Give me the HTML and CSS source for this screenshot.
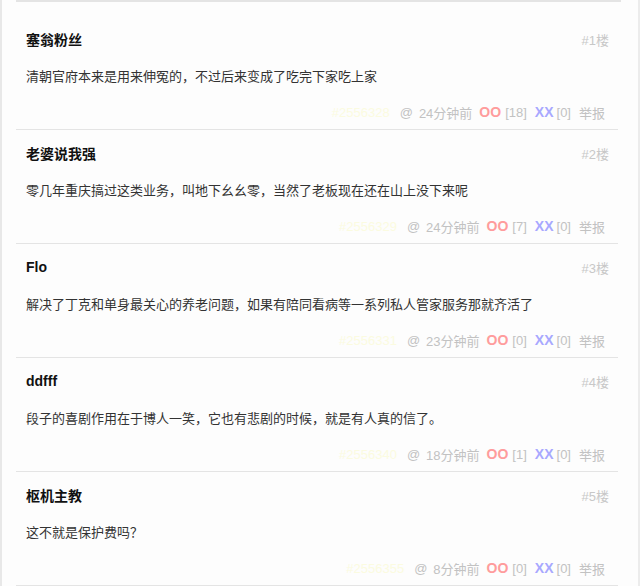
FILE: index.html
```html
<!DOCTYPE html>
<html lang="zh">
<head>
<meta charset="utf-8">
<link rel="stylesheet" href="styles.css">
</head>
<body>
<div class="wrap">
  <div class="topline"></div>
  <ol class="list">
    <li class="item">
      <div class="head"><b class="name">塞翁粉丝</b><span class="floor">#1楼</span></div>
      <p class="text">清朝官府本来是用来伸冤的，不过后来变成了吃完下家吃上家</p>
      <div class="foot"><span class="hash">#2556328</span><span class="at">@</span><span class="time">24分钟前</span><span class="oo">OO</span><span class="cnt">[18]</span><span class="xx">XX</span><span class="cnt">[0]</span><span>举报</span></div>
    </li>
    <li class="item">
      <div class="head"><b class="name">老婆说我强</b><span class="floor">#2楼</span></div>
      <p class="text">零几年重庆搞过这类业务，叫地下幺幺零，当然了老板现在还在山上没下来呢</p>
      <div class="foot"><span class="hash">#2556329</span><span class="at">@</span><span class="time">24分钟前</span><span class="oo">OO</span><span class="cnt">[7]</span><span class="xx">XX</span><span class="cnt">[0]</span><span>举报</span></div>
    </li>
    <li class="item">
      <div class="head"><b class="name">Flo</b><span class="floor">#3楼</span></div>
      <p class="text">解决了丁克和单身最关心的养老问题，如果有陪同看病等一系列私人管家服务那就齐活了</p>
      <div class="foot"><span class="hash">#2556331</span><span class="at">@</span><span class="time">23分钟前</span><span class="oo">OO</span><span class="cnt">[0]</span><span class="xx">XX</span><span class="cnt">[0]</span><span>举报</span></div>
    </li>
    <li class="item">
      <div class="head"><b class="name">ddfff</b><span class="floor">#4楼</span></div>
      <p class="text">段子的喜剧作用在于博人一笑，它也有悲剧的时候，就是有人真的信了。</p>
      <div class="foot"><span class="hash">#2556340</span><span class="at">@</span><span class="time">18分钟前</span><span class="oo">OO</span><span class="cnt">[1]</span><span class="xx">XX</span><span class="cnt">[0]</span><span>举报</span></div>
    </li>
    <li class="item">
      <div class="head"><b class="name">枢机主教</b><span class="floor">#5楼</span></div>
      <p class="text">这不就是保护费吗？</p>
      <div class="foot"><span class="hash">#2556355</span><span class="at">@</span><span class="time">8分钟前</span><span class="oo">OO</span><span class="cnt">[0]</span><span class="xx">XX</span><span class="cnt">[0]</span><span>举报</span></div>
    </li>
  </ol>
</div>
</body>
</html>
```

FILE: styles.css
```css
* { box-sizing: border-box; }
html, body { margin: 0; padding: 0; background: #fff; }
body {
  font-family: "Liberation Sans", Arial, "Noto Sans CJK SC", sans-serif;
  font-size: 13px;
  color: #333;
}
.wrap {
  width: 640px;
  height: 586px;
  overflow: hidden;
  background: #fdfdfd;
  border-left: 2px solid #e8e8e8;
  border-right: 2px solid #ececec;
}
.topline {
  height: 2px;
  margin: 0 17px 0 14px;
  background: #e4e4e4;
}
.list {
  list-style: none;
  margin: 0 20px 0 14px;
  padding: 14px 0 0;
}
.item {
  border-bottom: 1px solid #e4e4e4;
  padding: 13px 9px 7px 10px;
}
.head {
  display: flex;
  justify-content: space-between;
  align-items: center;
  height: 20px;
}
.name {
  font-size: 14px;
  font-weight: bold;
  color: #111;
}
.floor {
  font-size: 13px;
  color: #c8c8c8;
}
.text {
  margin: 18px 0 0;
  line-height: 20px;
  height: 20px;
  white-space: nowrap;
  color: #333;
}
.foot {
  margin-top: 15px;
  height: 20px;
  display: flex;
  justify-content: flex-end;
  align-items: center;
  font-size: 13px;
  color: #c2c2c2;
  padding-right: 4px;
}
.hash { color: #fbfbe0; margin-right: 10px; }
.at { margin-right: 6px; }
.time { margin-right: 7px; }
.oo { color: #ff9c9c; font-weight: bold; font-size: 14px; margin-right: 4px; }
.xx { color: #a8a8ff; font-weight: bold; font-size: 14px; margin-right: 3px; }
.cnt { margin-right: 8px; }
.cnt:last-of-type { margin-right: 7px; }
```
